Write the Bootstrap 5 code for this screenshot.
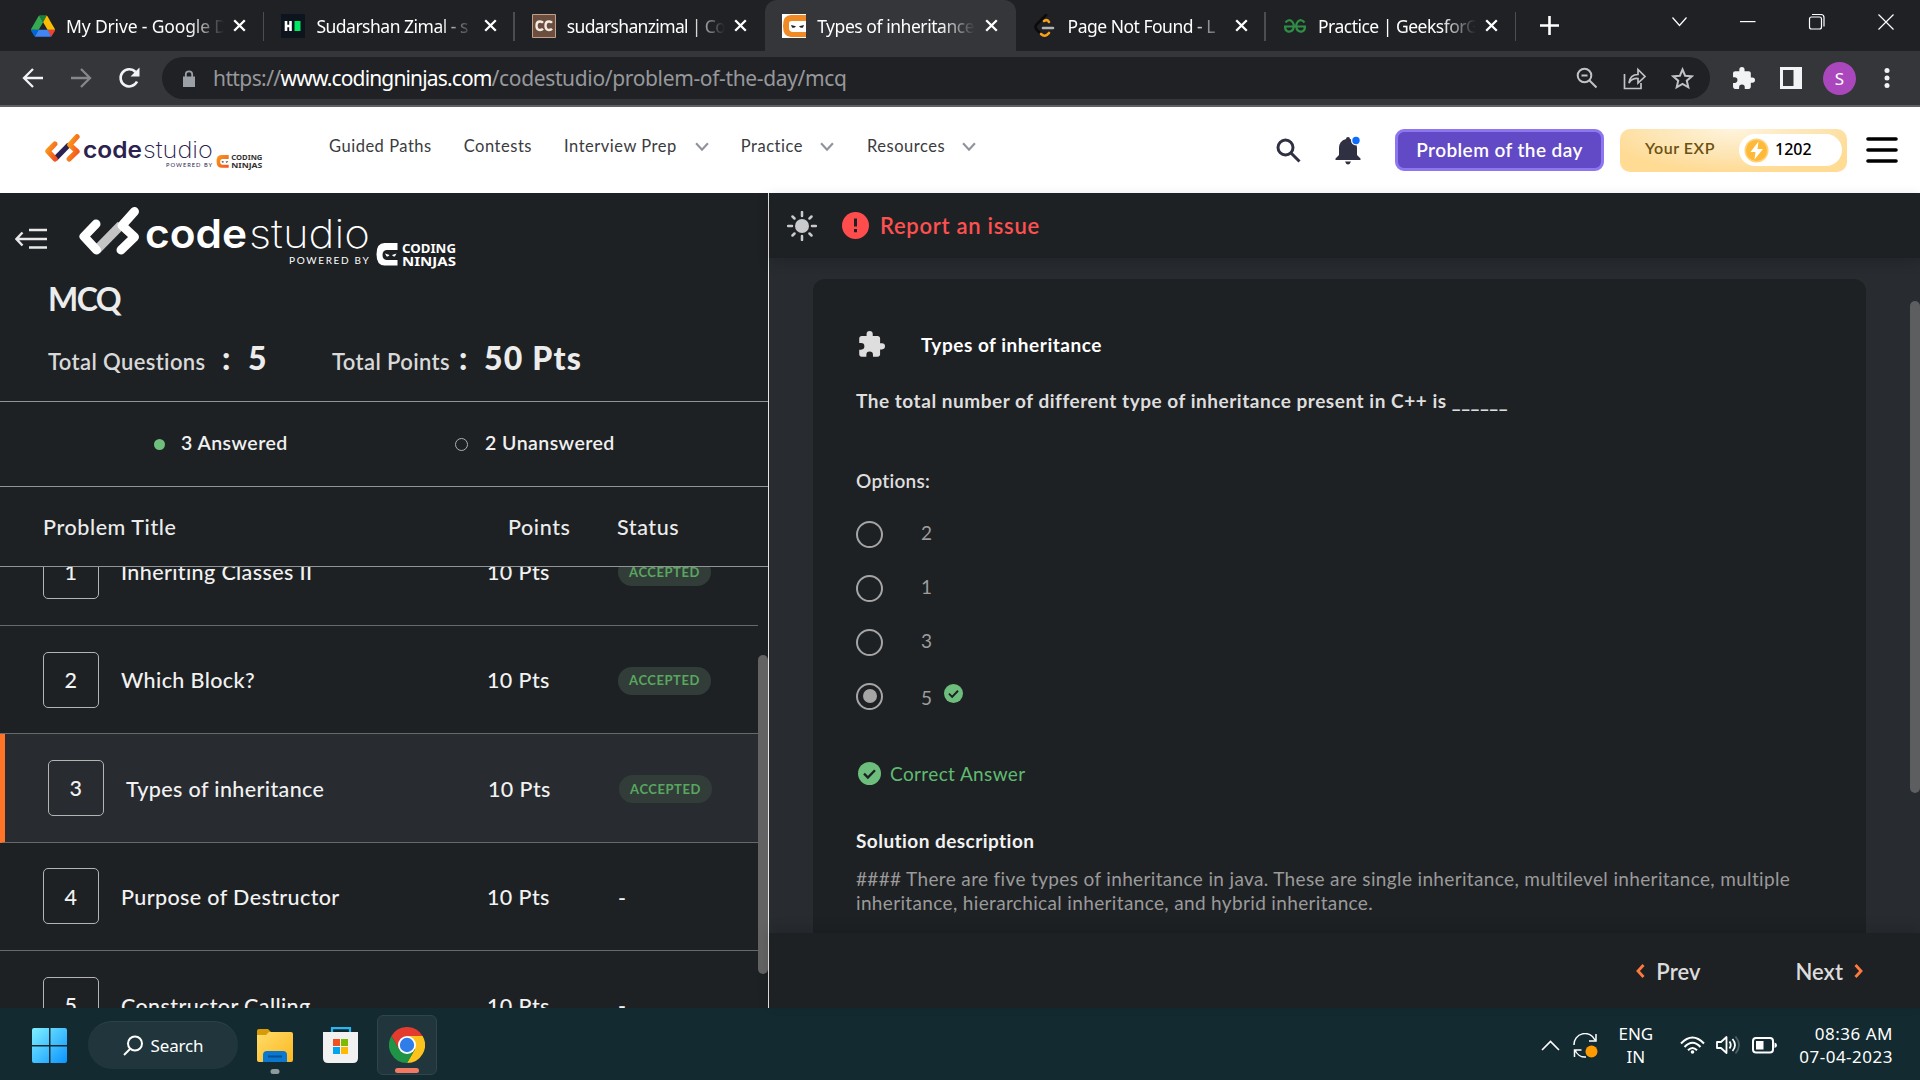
<!doctype html>
<html lang="en">
<head>
<meta charset="utf-8">
<title>Types of inheritance - Code Studio</title>
<meta name="viewport" content="width=device-width, initial-scale=1">
<link href="https://cdn.jsdelivr.net/npm/bootstrap@5.3.0/dist/css/bootstrap.min.css" rel="stylesheet">
<style>
  :root { --ink: #1e2124; --ui: "Noto Sans", "Open Sans", sans-serif; --site: Lato, "Open Sans", sans-serif; }
  body { width: 1920px; height: 1080px; font-family: var(--site); letter-spacing: .38px; line-height: 1; background: var(--ink); }
  svg { display: block; flex: none; }
  .ui-font { font-family: var(--ui); letter-spacing: 0; }

  /* browser */
  .tab-strip { height: 51px; background: #202124; padding-left: 14px; }
  .tab-item { width: 250.4px; padding: 0 18px 0 17px; position: relative; color: #fff; font-size: 17.5px; letter-spacing: -.5px; }
  .tab-item.live { background: #35363a; border-radius: 12px 12px 0 0; }
  .tab-item.split::after { content: ""; position: absolute; right: 0; top: 12px; width: 1.5px; height: 29px; background: #4b4d51; }
  .tab-title { width: 158px; margin-left: 11px; white-space: nowrap; line-height: 26px;
    -webkit-mask-image: linear-gradient(90deg, #000 78%, transparent 100%); mask-image: linear-gradient(90deg, #000 78%, transparent 100%); }
  .fav { width: 24px; height: 24px; }
  .tool-bar { height: 56px; background: #35363a; border-bottom: 2px solid #5f5f66; padding-left: 22px; }
  .url-pill { width: 1548px; height: 42px; border-radius: 21px; background: #202124; margin-left: 22px; padding: 0 16px 0 21px; color: #96989c; font-size: 21px; }
  .url-host { color: #fff; letter-spacing: -.85px; }
  .avatar { width: 33px; height: 33px; background: #ab47bc; color: #fff; font-size: 17px; margin-left: 21px; }

  /* site header */
  .site-head { height: 86px; background: #fff; padding-left: 45px; }
  .site-nav { font-size: 16.5px; letter-spacing: .52px; color: #3a3b40; padding-bottom: 7px; }
  .potd { width: 209px; height: 42px; border: 3px solid #8e76f1; border-radius: 9px; background: #6249c6; color: #fff; font-size: 19px; font-weight: 600; letter-spacing: .42px; padding-bottom: 2px; }
  .exp-box { width: 227px; height: 43px; border-radius: 10px; padding: 0 5px 0 25px; background: radial-gradient(ellipse 60% 100% at 50% 0, #fff4dc, #fde5b4 60%, #ffdb94); color: #6b5212; font-size: 16px; font-weight: 600; letter-spacing: .55px; }
  .exp-pill { width: 103px; height: 32px; background: #fff; color: #000; padding-left: 5px; font-weight: 500; }

  /* problem list */
  .panel-left { width: 769px; border-right: 1.5px solid #e6e6e6; color: #ececec; }
  .list-intro { height: 209px; border-bottom: 1px solid #929394; }
  .mcq { font-size: 32px; font-weight: 700; letter-spacing: -1.6px; margin: 10px 0 0 48px; line-height: 40px; }
  .totals { margin: 19px 0 0 48px; font-size: 22px; font-weight: 600; color: #d9d9d9; line-height: 40px; }
  .totals b { font-size: 32px; color: #ececec; letter-spacing: 1px; }
  .counts { height: 85px; border-bottom: 1px solid #929394; font-size: 19.5px; font-weight: 600; letter-spacing: .45px; padding-left: 154px; color: #f0f0f0; }
  .counts .tally { margin-top: -2px; }
  .dot-done { width: 11px; height: 11px; background: #6ebf7b; }
  .dot-open { width: 13px; height: 13px; border: 1px solid #b0b0b0; }
  .list-cols { height: 80px; border-bottom: 1px solid #929394; font-size: 21.5px; font-weight: 500; letter-spacing: .58px; padding: 2px 0 0 43px; }
  .list-view { height: 441px; }
  .list-shift { width: 758px; margin-top: -49.4px; }
  .prob { height: 108.4px; border-bottom: 1px solid #68696b; font-size: 21.5px; font-weight: 500; padding-left: 43px; color: #f2f2f2; }
  .prob.current { background: #282b30; border-left: 5px solid #ff7426; }
  .num { width: 56px; height: 56px; border: 1px solid #b4b4b4; border-radius: 5px; padding-top: 2px; }
  .c-title { width: 366px; padding: 3px 0 0 22px; }
  .current .c-title { width: 362px; }
  .c-pts { width: 153px; padding: 3px 0 0 22px; }
  .pill-ok { width: 93px; height: 28px; background: #323d3a; color: #59a75f; font-size: 13px; font-weight: 700; letter-spacing: .55px; margin-top: 2px; }
  .thumb-l { position: absolute; right: 0; top: 88px; width: 10px; height: 319px; border-radius: 5px; background: #636363; }

  /* question */
  .panel-right { background: #282b30; }
  .report { height: 65px; background: var(--ink); padding-left: 18px; box-shadow: 0 4px 12px rgba(0,0,0,.16); color: #ff5050; font-size: 22px; font-weight: 600; letter-spacing: .72px; z-index: 1; }
  .q-wrap { height: 675px; padding: 21px 54px 0 44px; }
  .q-card { height: 720px; background: var(--ink); border-radius: 12px; padding: 52px 43px 0; font-size: 19px; color: #dedede; }
  .q-card b { letter-spacing: .53px; }
  .choice { height: 54px; color: #9d9d9d; }
  .ring { width: 27px; height: 27px; border: 2px solid #a5a5a5; margin-right: 38px; }
  .ring.on::after { content: ""; width: 14px; height: 14px; border-radius: 50%; background: #a5a5a5; }
  .right-msg { color: #5fbb70; margin-top: 39px; }
  .explain { line-height: 24px; color: #9a9a9a; margin-top: 17px; letter-spacing: .35px; }
  .pager { height: 75px; background: var(--ink); box-shadow: 0 -4px 12px rgba(0,0,0,.14); font-size: 22px; font-weight: 600; color: #dcdcdc; padding-right: 57px; letter-spacing: .05px; z-index: 1; }
  .pager span { padding-top: 3px; }
  .thumb-r { position: absolute; right: 0; top: 108px; width: 10px; height: 492px; border-radius: 5px; background: #5c5e60; z-index: 2; }

  /* taskbar */
  .taskbar { height: 72px; background: #122a30; color: #fff; font-size: 17px; padding: 2px 0 0 32px; }
  .find { width: 150px; height: 48px; background: #20363c; border-top: 1px solid #2d4248; margin-left: 21px; letter-spacing: -.15px; }
  .app { height: 60px; position: relative; }
  .app-mark { position: absolute; bottom: 1px; left: 50%; transform: translateX(-50%); height: 5px; border-radius: 3px; }
  .app-live { width: 60px; background: #20363c; border: 1px solid #30454b; border-radius: 6px; margin-left: 19px; }
  .tray-text { line-height: 23px; }
</style>
</head>
<body class="d-flex flex-column overflow-hidden m-0">

<svg width="0" height="0" class="position-absolute">
  <defs>
    <linearGradient id="orange" x1="0" y1="0" x2="1" y2="1"><stop offset="0" stop-color="#f9a01b"/><stop offset="1" stop-color="#f4511e"/></linearGradient>
    <linearGradient id="win" x1="0" y1="0" x2="1" y2="1"><stop offset="0" stop-color="#80f0ff"/><stop offset="1" stop-color="#0a94ff"/></linearGradient>
    <linearGradient id="fold" x1="0" y1="0" x2="1" y2="1"><stop offset="0" stop-color="#ffdc6a"/><stop offset="1" stop-color="#fcb81f"/></linearGradient>
    <symbol id="x" viewBox="0 0 13 13"><path d="M1.2 1.2l10.6 10.6M11.8 1.2L1.2 11.8" stroke="#fff" stroke-width="2.3"/></symbol>
    <symbol id="puzzle" viewBox="1 1 22 22"><path fill="currentColor" d="M20.5 11H19V7c0-1.1-.9-2-2-2h-4V3.500a2.500 2.500 0 0 0-5 0V5H4c-1.100 0-2 .9-2 2v3.800h1.500a2.700 2.700 0 0 1 0 5.400H2V20c0 1.100.9 2 2 2h3.800v-1.500a2.700 2.700 0 0 1 5.400 0V22H17c1.100 0 2-.9 2-2v-4h1.500a2.500 2.500 0 0 0 0-5z"/></symbol>
    <symbol id="tick" viewBox="0 0 24 24"><circle cx="12" cy="12" r="12" fill="#6dbe7d"/><path d="M6.300 12.200l4 4 7.400-7.600" fill="none" stroke="#1e2124" stroke-width="2.500"/></symbol>
    <symbol id="down" viewBox="0 0 13 9"><path d="M1 1l5.500 6L12 1" fill="none" stroke="#91939c" stroke-width="2"/></symbol>
    <!-- brand lockup, tinted through custom properties -->
    <symbol id="brand" viewBox="0 0 378 62">
      <path d="M18 42.500L42 18" stroke="var(--bar)" stroke-width="9"/>
      <g fill="none" stroke="var(--mark)" stroke-width="9" stroke-linecap="round" stroke-linejoin="round"><path d="M17 17L5 29.500 17.500 43"/><path d="M55.500 4.500L43 18.500 55.500 30 42 43"/></g>
      <g font-family="Inter, sans-serif" font-size="40" fill="var(--word)"><text x="66" y="41" font-weight="600" textLength="102" lengthAdjust="spacingAndGlyphs" letter-spacing="0">code</text><text x="170" y="41" font-weight="200" textLength="121" lengthAdjust="spacingAndGlyphs" letter-spacing="0">studio</text></g>
      <text x="210" y="57.300" font-family="Lato, sans-serif" font-size="10" textLength="80" fill="var(--word)">POWERED BY</text>
      <path d="M318.500 36h-13q-8 0-8 11.200t8 11.200h13v-5.400h-11q-4-.5-4-5t4-5h11z" fill="var(--mark)"/>
      <path d="M306 46.500l4.500 1.500q-1 2-3 1.200zM317.500 46.500l-4.500 1.500q1 2 3 1.200z" fill="var(--eye)"/>
      <g font-family="Noto Sans, sans-serif" font-size="12.500" font-weight="700" letter-spacing="0" fill="var(--tag)"><text x="323" y="45.500" textLength="54" lengthAdjust="spacingAndGlyphs">CODING</text><text x="323" y="59" textLength="54" lengthAdjust="spacingAndGlyphs">NINJAS</text></g>
    </symbol>
  </defs>
</svg>

<!-- browser tabs -->
<div class="tab-strip ui-font d-flex flex-shrink-0">
  <div class="tab-item split d-flex align-items-center">
    <svg class="fav" viewBox="0 0 87 78"><path d="M7 67l4 7c1 1 2 2 3 3l14-24H0c0 2 1 3 1 5z" fill="#0066da"/><path d="M44 25L30 1c-1 1-2 2-3 3L1 49c-1 1-1 3-1 4h28z" fill="#34a853"/><path d="M73 77c2-1 3-2 3-3l2-3 8-13c1-2 1-3 1-5H59l6 12z" fill="#ea4335"/><path d="M44 25L57 1c-1-1-3-1-4-1H34c-1 0-3 0-4 1z" fill="#188038"/><path d="M60 53H28L14 77c1 1 3 1 4 1h51c1 0 3 0 4-1z" fill="#4285f4"/><path d="M73 27L60 4c-1-1-2-2-3-3L44 25l16 28h27c0-1 0-3-1-4z" fill="#fbbc04"/></svg>
    <span class="tab-title" style="letter-spacing:-.15px">My Drive - Google D</span><svg class="ms-auto" width="13" height="13"><use href="#x"/></svg>
  </div>
  <div class="tab-item split d-flex align-items-center">
    <svg class="fav" viewBox="0 0 24 24"><path fill="#0e141e" d="M0 0h24v24H0z"/><path d="M5 7v10M9.500 7v10M5 12h5" stroke="#fff" stroke-width="2.600"/><path fill="#00ea64" d="M13.500 7h6v10h-6z"/></svg>
    <span class="tab-title">Sudarshan Zimal - s</span><svg class="ms-auto" width="13" height="13"><use href="#x"/></svg>
  </div>
  <div class="tab-item d-flex align-items-center">
    <svg class="fav" viewBox="0 0 24 24"><path fill="#6b4e3d" stroke="#c0a08a" d="M.5.5h23v23H.5z"/><path d="M11 8.800q-1-1.300-3-1.300-3.500 0-3.500 4.200T8 16q2 0 3-1.300M20 8.800q-1-1.300-3-1.300-3.500 0-3.500 4.200T17 16q2 0 3-1.300" fill="none" stroke="#f3ece6" stroke-width="2.400"/></svg>
    <span class="tab-title" style="letter-spacing:-.65px">sudarshanzimal | Co</span><svg class="ms-auto" width="13" height="13"><use href="#x"/></svg>
  </div>
  <div class="tab-item live d-flex align-items-center">
    <svg class="fav" viewBox="0 0 24 24"><path fill="#fff" d="M0 0h24v24H0z"/><path d="M24 1H9Q1 1 1 12t8 11h15v-5H11q-4 0-4-4V9q0-2 3-2h14z" fill="#f08a24"/><path d="M9 11l5 1.200q-2 2.500-4 1.200zM22 11l-5 1.200q2 2.500 4 1.200z" fill="#222"/></svg>
    <span class="tab-title" style="letter-spacing:-.45px">Types of inheritance</span><svg class="ms-auto" width="13" height="13"><use href="#x"/></svg>
  </div>
  <div class="tab-item split d-flex align-items-center">
    <svg class="fav" viewBox="0 0 24 24" fill="none" stroke-width="2.600" stroke-linecap="round"><path d="M13 1L4 10q-3 3 0 6l4 4" stroke="#0b0b0b"/><path d="M11 7q3-2 5 1M8 20q4 4 8-1" stroke="#f89f1b"/><path d="M10 14h10" stroke="#b3b3b3"/></svg>
    <span class="tab-title">Page Not Found - L</span><svg class="ms-auto" width="13" height="13"><use href="#x"/></svg>
  </div>
  <div class="tab-item split d-flex align-items-center">
    <svg class="fav" viewBox="0 0 24 24" fill="none" stroke="#2f8d46" stroke-width="2.200"><path d="M1 12.500h22M2.500 8.500Q6 4.500 9 7.500t1 8q-2.500 3.500-6 1.500-2.500-1.500-1.500-4.500M21.500 8.500Q18 4.500 15 7.500t-1 8q2.500 3.500 6 1.500 2.500-1.500 1.500-4.500"/></svg>
    <span class="tab-title">Practice | GeeksforG</span><svg class="ms-auto" width="13" height="13"><use href="#x"/></svg>
  </div>
  <svg class="align-self-center ms-4" width="19" height="19"><path d="M9.500 0v19M0 9.500h19" stroke="#fff" stroke-width="2.600"/></svg>
  <svg class="ms-auto" width="250" height="43" fill="none" stroke="#fff" stroke-width="1.200"><path d="M2.500 17.500l7 8 7-8"/><path d="M70 21.600h15.500"/><rect x="139.500" y="17" width="12" height="12" rx="2"/><path d="M142 14.500h9q3 0 3 3v9"/><path d="M208.500 14.500l15 15M223.500 14.500l-15 15"/></svg>
</div>

<!-- browser toolbar -->
<div class="tool-bar ui-font d-flex align-items-center flex-shrink-0">
  <svg width="22" height="22" fill="none" stroke="#f1f3f4" stroke-width="2.300"><path d="M21 11H2.500M11 2L2 11l9 9"/></svg>
  <svg style="margin-left:27px" width="22" height="22" fill="none" stroke="#85878b" stroke-width="2.300"><path d="M0 11h18.500M10 2l9 9-9 9"/></svg>
  <svg style="margin-left:25px" width="22" height="22" fill="none" stroke="#f1f3f4" stroke-width="2.600"><path d="M19 14.500A8.600 8.600 0 1 1 17.500 5"/><path d="M21.500.5v9h-9z" fill="#f1f3f4" stroke="none"/></svg>
  <div class="url-pill d-flex align-items-center">
    <svg width="12" height="17"><path d="M0 6.500h12V17H0z" fill="#9aa0a6"/><path d="M2.800 7V4.500a3.200 3.200 0 0 1 6.400 0V7" fill="none" stroke="#9aa0a6" stroke-width="1.800"/></svg>
    <span class="text-nowrap" style="margin-left:18px"><span style="letter-spacing:-.6px">https://</span><span class="url-host">www.codingninjas.com</span><span style="letter-spacing:-.35px">/codestudio/problem-of-the-day/mcq</span></span>
    <div class="ms-auto d-flex">
      <svg width="22" height="22" fill="none" stroke="#c0c2c5" stroke-width="2"><circle cx="8.500" cy="8.500" r="6.800"/><path d="M5.500 8.500h6M13.500 13.500l7 7"/></svg>
      <svg style="margin-left:25px" width="24" height="23" fill="none" stroke="#c0c2c5" stroke-width="1.700"><path d="M1.500 7v14.500H18V16M6 16q1-8.500 9-8.500V2.500l7 7-7 6.500v-4.500Q9 11 6 16z"/></svg>
      <svg style="margin-left:24px" width="23" height="23" fill="none" stroke="#c0c2c5" stroke-width="2"><path d="M11.500 2.500l2.600 6.200 6.700.6-5 4.400 1.500 6.600-5.800-3.500-5.800 3.500 1.500-6.600-5-4.400 6.700-.6z"/></svg>
    </div>
  </div>
  <svg style="margin-left:22px;color:#f1f3f4" width="23" height="23"><use href="#puzzle"/></svg>
  <svg style="margin-left:25px" width="22" height="22"><path d="M1.500 1.500h19v19h-19z" fill="none" stroke="#f1f3f4" stroke-width="3"/><path d="M13.500 2h7v18h-7z" fill="#f1f3f4"/></svg>
  <div class="avatar rounded-circle d-flex align-items-center justify-content-center">S</div>
  <svg style="margin-left:28px" width="6" height="22" fill="#f1f3f4"><circle cx="3" cy="3.400" r="2.500"/><circle cx="3" cy="11" r="2.500"/><circle cx="3" cy="18.600" r="2.500"/></svg>
</div>

<!-- site header -->
<header class="site-head d-flex align-items-center flex-shrink-0">
  <svg style="margin-top:3px" width="218" height="36" color="#333" ><g style="--bar:#2b2250;--mark:url(#orange);--word:#2b2250;--tag:#333;--eye:#333"><use href="#brand"/></g></svg>
  <nav class="site-nav d-flex align-items-center text-nowrap">
    <span style="margin-left:66px">Guided Paths</span><span style="margin-left:32px">Contests</span>
    <span style="margin-left:32px">Interview Prep</span><svg style="margin-left:18px" width="14" height="10"><use href="#down"/></svg>
    <span style="margin-left:32px">Practice</span><svg style="margin-left:17px" width="14" height="10"><use href="#down"/></svg>
    <span style="margin-left:33px">Resources</span><svg style="margin-left:17px" width="14" height="10"><use href="#down"/></svg>
  </nav>
  <div class="ms-auto d-flex align-items-center" style="padding-right:22px">
    <svg width="25" height="25" fill="none" stroke="#2f3042" stroke-width="3"><circle cx="9.500" cy="9.500" r="7.500"/><path d="M15 15l8.500 8.500"/></svg>
    <svg style="margin-left:34px" width="27" height="29"><path d="M13 1q2 0 2 2 7 2 7 9v7l3.500 3.500V24H.5v-1.500L4 19v-7q0-7 7-9 0-2 2-2zM10 25.500h6q-1 3-3 3t-3-3z" fill="#2f3042"/><circle cx="21" cy="4.500" r="5" fill="#fff"/><circle cx="21" cy="4.500" r="3.700" fill="#0d6efd"/></svg>
    <div class="potd d-flex align-items-center justify-content-center" style="margin-left:33px">Problem of the day</div>
    <div class="exp-box d-flex align-items-center justify-content-between" style="margin-left:16px"><span class="pb-1">Your EXP</span>
      <div class="exp-pill rounded-pill ui-font d-flex align-items-center">
        <svg width="25" height="25"><circle cx="12.500" cy="12.500" r="12" fill="#ffd27a"/><circle cx="12.500" cy="12.500" r="10.500" fill="#ffb938"/><path d="M14.500 3.500L6.500 14h5l-1 7.500L19 11h-5.500z" fill="#fff"/></svg>
        <span style="margin:-2px 0 0 6px">1202</span>
      </div>
    </div>
    <svg style="margin-left:19px" width="32" height="26" stroke="#000" stroke-width="3.600" stroke-linecap="round"><path d="M2 2h28M2 13h28M2 24h28"/></svg>
  </div>
</header>

<main class="d-flex" style="height:815px">
  <!-- problem list -->
  <section class="panel-left d-flex flex-column flex-shrink-0">
    <div class="list-intro">
      <div class="d-flex align-items-start">
        <svg style="margin:35px 0 0 15px" width="33" height="22" fill="none" stroke="#e8e8e8" stroke-width="2.400"><path d="M14 2h18M1.500 11H32M14 19.500h18M7.500 4.500L1.500 11l6 6.500"/></svg>
        <svg style="margin:14px 0 0 31px;--bar:#c4c4c4;--mark:#fff;--word:#fff;--tag:#fff;--eye:#fff" width="378" height="62"><use href="#brand"/></svg>
      </div>
      <div class="mcq">MCQ</div>
      <div class="totals d-flex align-items-baseline">
        <span style="width:174px">Total Questions</span><b style="width:26px">:</b><b style="width:84px">5</b>
        <span style="width:127px">Total Points</span><b style="width:25px">:</b><b class="text-nowrap" style="letter-spacing:1.2px">50 Pts</b>
      </div>
    </div>
    <div class="counts d-flex align-items-center">
      <span class="dot-done rounded-circle"></span><span class="tally" style="width:274px;padding-left:16px">3 Answered</span>
      <span class="dot-open rounded-circle" style="margin-left:16px"></span><span class="tally" style="padding-left:17px">2 Unanswered</span>
    </div>
    <div class="list-cols d-flex align-items-center"><span style="width:465px">Problem Title</span><span style="width:109px">Points</span><span>Status</span></div>
    <div class="list-view position-relative overflow-hidden">
      <div class="list-shift">
        <div class="prob d-flex align-items-center"><span class="num d-flex align-items-center justify-content-center">1</span><span class="c-title">Inheriting Classes II</span><span class="c-pts">10 Pts</span><span class="pill-ok rounded-pill d-flex align-items-center justify-content-center">ACCEPTED</span></div>
        <div class="prob d-flex align-items-center"><span class="num d-flex align-items-center justify-content-center">2</span><span class="c-title">Which Block?</span><span class="c-pts">10 Pts</span><span class="pill-ok rounded-pill d-flex align-items-center justify-content-center">ACCEPTED</span></div>
        <div class="prob current d-flex align-items-center"><span class="num d-flex align-items-center justify-content-center">3</span><span class="c-title">Types of inheritance</span><span class="c-pts">10 Pts</span><span class="pill-ok rounded-pill d-flex align-items-center justify-content-center">ACCEPTED</span></div>
        <div class="prob d-flex align-items-center"><span class="num d-flex align-items-center justify-content-center">4</span><span class="c-title">Purpose of Destructor</span><span class="c-pts">10 Pts</span><span class="pt-1">-</span></div>
        <div class="prob d-flex align-items-center"><span class="num d-flex align-items-center justify-content-center">5</span><span class="c-title">Constructor Calling</span><span class="c-pts">10 Pts</span><span class="pt-1">-</span></div>
      </div>
      <div class="thumb-l"></div>
    </div>
  </section>

  <!-- question -->
  <section class="panel-right position-relative flex-grow-1 d-flex flex-column">
    <div class="report position-relative d-flex align-items-center flex-shrink-0">
      <svg width="30" height="30"><circle cx="15" cy="15" r="7" fill="#c9cacb"/><path d="M15 1v4M15 25v4M1 15h4M25 15h4M5.500 5.500l2 2M22.500 22.500l2 2M24.500 5.500l-2 2M7.500 22.500l-2 2" stroke="#c9cacb" stroke-width="2.500" stroke-linecap="round"/></svg>
      <svg style="margin-left:25px" width="27" height="27"><circle cx="13.500" cy="13.500" r="13.500" fill="#ff4d4d"/><path d="M13.500 6.500v8M13.500 17v3.200" stroke="#1e2124" stroke-width="3"/></svg>
      <span style="margin-left:11px">Report an issue</span>
    </div>
    <div class="q-wrap overflow-hidden">
      <div class="q-card">
        <div class="d-flex align-items-center" style="color:#fff"><svg style="margin-left:2px;color:#dedede" width="27" height="27"><use href="#puzzle"/></svg><b style="margin:-1px 0 0 36px">Types of inheritance</b></div>
        <div style="margin-top:33px"><b>The total number of different type of inheritance present in C++ is ______</b></div>
        <div style="margin-top:61px;margin-bottom:17px;font-weight:600;letter-spacing:.28px">Options:</div>
        <div class="choice d-flex align-items-center"><span class="ring rounded-circle"></span><span class="pb-1">2</span></div>
        <div class="choice d-flex align-items-center"><span class="ring rounded-circle"></span><span class="pb-1">1</span></div>
        <div class="choice d-flex align-items-center"><span class="ring rounded-circle"></span><span class="pb-1">3</span></div>
        <div class="choice d-flex align-items-center"><span class="ring on rounded-circle d-flex align-items-center justify-content-center"></span><span style="padding-top:2px">5</span><svg style="margin:0 0 6px 12px" width="19" height="19"><use href="#tick"/></svg></div>
        <div class="right-msg d-flex align-items-center"><svg style="margin:0 9px 0 2px" width="23" height="23"><use href="#tick"/></svg>Correct Answer</div>
        <div style="margin-top:46px;color:#f2f2f2"><b style="letter-spacing:.45px">Solution description</b></div>
        <div class="explain">#### There are five types of inheritance in java. These are single inheritance, multilevel inheritance, multiple<br>inheritance, hierarchical inheritance, and hybrid inheritance.</div>
      </div>
    </div>
    <div class="pager position-relative d-flex align-items-center justify-content-end">
      <svg width="9" height="14" fill="none" stroke="#ff7a3c" stroke-width="2.800"><path d="M7.500 1L2 7l5.500 6"/></svg><span style="margin:0 95px 0 11px">Prev</span>
      <span style="margin-right:11px">Next</span><svg width="9" height="14" fill="none" stroke="#ff7a3c" stroke-width="2.800"><path d="M1.500 1L7 7l-5.500 6"/></svg>
    </div>
    <div class="thumb-r"></div>
  </section>
</main>

<!-- taskbar -->
<footer class="taskbar ui-font d-flex align-items-center flex-shrink-0 position-relative">
  <svg width="35" height="35"><path d="M2 0h15v17H0V2q0-2 2-2zM18.500 0H33q2 0 2 2v15H18.500zM0 18.500h17V35H2q-2 0-2-2zM18.500 18.500H35V33q0 2-2 2H18.500z" fill="url(#win)"/></svg>
  <div class="find rounded-pill d-flex align-items-center justify-content-center"><svg width="20" height="21" fill="none" stroke="#fff" stroke-width="2"><circle cx="12" cy="8.500" r="7"/><path d="M7 14l-6 6"/></svg><span style="margin-left:8px">Search</span></div>
  <div class="app d-flex align-items-center" style="margin-left:19px">
    <svg width="36" height="34"><path d="M2 1h9l4 4-3 4H0V3q0-2 2-2z" fill="#d99a07"/><path d="M12 4h22q2 0 2 2v26q0 2-2 2H2q-2 0-2-2V7h9z" fill="url(#fold)"/><path d="M6 34V27q0-4 4-4h16q4 0 4 4v7z" fill="#0b78d0"/><path d="M11 28.500h14" stroke="#0a4f94" stroke-width="2"/></svg>
    <span class="app-mark" style="width:9px;background:#8f9a9d"></span>
  </div>
  <svg style="margin-left:30px" width="35" height="36"><path d="M9 6V1.200h18V6" fill="none" stroke="#2ab6f2" stroke-width="2.200"/><path d="M0 5h35v26q0 5-5 5H5q-5 0-5-5z" fill="#f1f1f1"/><path fill="#f25022" d="M10 12h7v7h-7z"/><path fill="#7fba00" d="M18 12h7v7h-7z"/><path fill="#00a4ef" d="M10 20h7v7h-7z"/><path fill="#ffb900" d="M18 20h7v7h-7z"/></svg>
  <div class="app app-live d-flex align-items-center justify-content-center">
    <svg width="36" height="36" viewBox="-18 -18 36 36"><path d="M0-9L-15.600-9A18 18 0 0 1 15.600-9z" fill="#e33b2e"/><path d="M-7.800 4.500L-15.600-9 0-9z" fill="#e33b2e"/><path d="M0-9h15.600A18 18 0 0 1 0 18L7.800 4.500z" fill="#fcc31e"/><path d="M7.800 4.500L-7.800 4.500-15.600-9A18 18 0 0 0 0 18z" fill="#1f9447"/><circle r="9" fill="#fff"/><circle r="7.200" fill="#2f7de9"/></svg>
    <span class="app-mark" style="width:24px;background:#f37a62"></span>
  </div>
  <div class="ms-auto d-flex align-items-center" style="padding-right:27px">
    <svg width="19" height="11" fill="none" stroke="#fff" stroke-width="1.600"><path d="M1 10l8.500-8.500L18 10"/></svg>
    <svg style="margin-left:13px" width="25" height="25" fill="none" stroke="#fff" stroke-width="1.500"><path d="M1 12A11 11 0 0 1 22 7M23 1v7h-7M13 24A11 11 0 0 1 2 17M1.500 24v-7h7"/><circle cx="18.500" cy="18.500" r="6" fill="#ff9a00" stroke="none"/></svg>
    <div class="tray-text text-center" style="margin-left:21px">ENG<br>IN</div>
    <svg style="margin-left:27px" width="25" height="18" fill="none" stroke="#fff" stroke-width="2"><path d="M1 7.500q11.500-12 23 0M4.500 11q8-8.500 16 0M8 14.200q4.500-4.500 9 0"/><circle cx="12.500" cy="16" r="1.800" fill="#fff" stroke="none"/></svg>
    <svg style="margin-left:11px" width="25" height="20" fill="none" stroke="#fff" stroke-width="1.800" stroke-linejoin="round"><path d="M1 7h4l5.500-5v16L5 13H1zM13.500 6.500q2.500 3.500 0 7M16.500 4q5 6 0 12"/><path d="M19.500 1.500q7 8.500 0 17" stroke="#4d6065"/></svg>
    <svg style="margin-left:11px" width="25" height="17"><rect x="1" y="1" width="20" height="14.500" rx="3" fill="none" stroke="#fff" stroke-width="2"/><path d="M4 4h7.500v8.500H4zM22.500 5.500q2.500.5 2.500 2.700t-2.500 2.800z" fill="#fff"/></svg>
    <div class="tray-text text-end" style="margin-left:22px;letter-spacing:.5px">08:36 AM<br>07-04-2023</div>
  </div>
</footer>

<script src="https://cdn.jsdelivr.net/npm/bootstrap@5.3.0/dist/js/bootstrap.bundle.min.js"></script>
</body>
</html>
